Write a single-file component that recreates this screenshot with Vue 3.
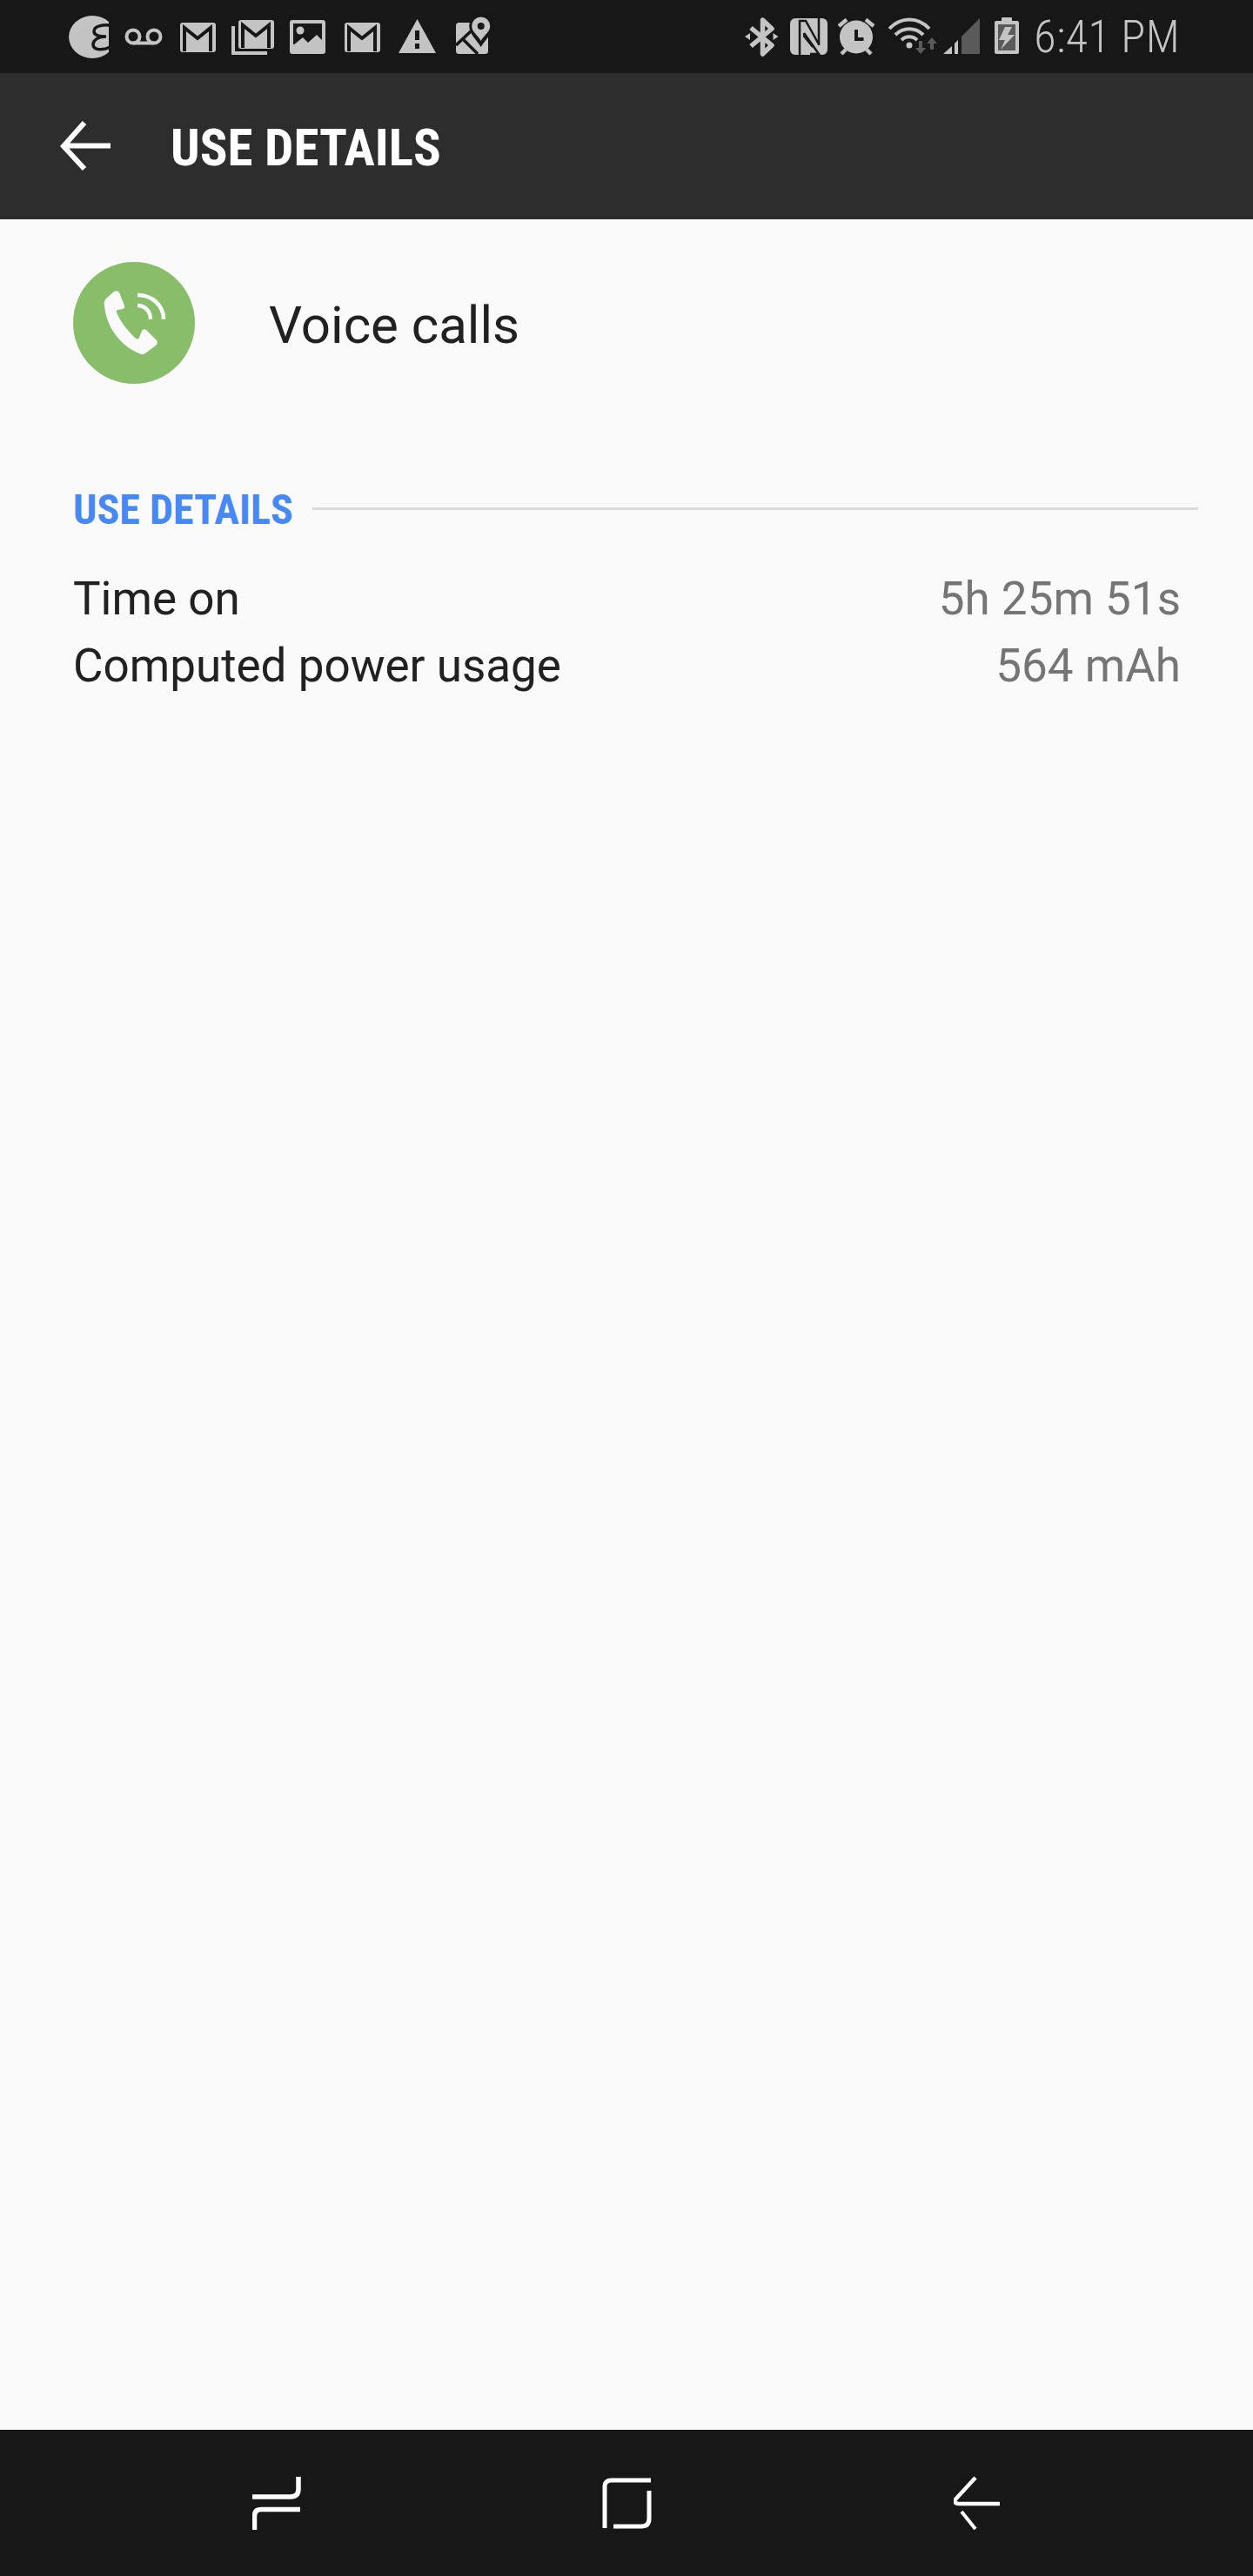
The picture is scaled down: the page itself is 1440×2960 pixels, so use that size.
<script setup>
const rows = [
  { label: 'Time on', value: '5h 25m 51s' },
  { label: 'Computed power usage', value: '564 mAh' }
]
</script>

<template>
  <div class="screen">
    <header class="status">
      <div class="status-left">
        <svg class="si" width="48" height="50" viewBox="78 17 48 50"><path fill="#c4c4c4" d="M125 25A27 24.500 0 1 0 125 60Z"/><g fill="none" stroke="#171717" stroke-width="3.500"><path d="M127 29C118 28 108 30 108 36C108 40 113 42 122 42C113 42 107 46 107 51C107 57 116 59 127 54"/></g></svg>
        <svg class="si m-vm" width="44" height="50" viewBox="143 17 44 50"><g fill="none" stroke="#c4c4c4" stroke-width="4"><circle cx="153" cy="42" r="7.500"/><circle cx="177" cy="42" r="7.500"/><path d="M153 49.500h24"/></g></svg>
        <svg class="si m-a" width="42" height="50" viewBox="207 17 42 50"><rect x="207" y="26" width="41" height="34" rx="3" fill="#c4c4c4"/><path d="M212 59V32l15 12 15-12v27" fill="none" stroke="#171717" stroke-width="4"/></svg>
        <svg class="si m-b" width="50" height="50" viewBox="266 17 50 50"><rect x="274" y="23" width="41" height="33" rx="3" fill="#c4c4c4"/><path d="M279 55V29l15 12 15-12v26" fill="none" stroke="#171717" stroke-width="4"/><path d="M268 30v31h39" fill="none" stroke="#c4c4c4" stroke-width="4"/></svg>
        <svg class="si m-c" width="42" height="50" viewBox="333 17 42 50"><rect x="333" y="23" width="41" height="39" rx="3" fill="#c4c4c4"/><rect x="337" y="27" width="33" height="24" fill="#171717"/><circle cx="345" cy="35" r="4.500" fill="#c4c4c4"/><path d="M337 52l11-9 6 6 10-9 6 6v8H337z" fill="#c4c4c4"/></svg>
        <svg class="si m-d" width="42" height="50" viewBox="396 17 42 50"><rect x="396" y="26" width="41" height="34" rx="3" fill="#c4c4c4"/><path d="M401 59V32l15 12 15-12v27" fill="none" stroke="#171717" stroke-width="4"/></svg>
        <svg class="si m-e" width="44" height="50" viewBox="458 17 44 50"><path d="M479.500 22l21.500 39h-43z" fill="#c4c4c4"/><path d="M477 35h5v11h-5zM477 50h5v6h-5z" fill="#171717"/></svg>
        <svg class="si m-f" width="40" height="50" viewBox="524 17 40 50"><rect x="524" y="26" width="37" height="36" rx="3.500" fill="#c4c4c4"/><path d="M524 52l17-16M532 45l17 17" fill="none" stroke="#171717" stroke-width="3.500"/><path d="M552.700 16.500a13.500 13.500 0 0 0-13.500 13.500c0 9 8 15 13.500 24 5.500-9 13.500-15 13.500-24a13.500 13.500 0 0 0-13.500-13.500z" fill="#171717"/><path d="M552.700 19.500a10.500 10.500 0 0 0-10.500 10.500c0 7 7 10 10.500 17 3.500-7 10.500-10 10.500-17a10.500 10.500 0 0 0-10.500-10.500z" fill="#c4c4c4"/><circle cx="552.700" cy="30" r="4" fill="#171717"/></svg>
      </div>
      <div class="status-right">
        <svg class="si" width="40" height="50" viewBox="856 17 40 50"><path d="M863 32l24 20-10.500 10V23L887 33l-24 20" fill="none" stroke="#c4c4c4" stroke-width="5.500" stroke-linejoin="round"/><path d="M856 42l6-4v8zM894.500 42l-6-4v8z" fill="#c4c4c4"/></svg>
        <svg class="si m-g" width="44" height="50" viewBox="908 17 44 50"><rect x="908" y="21" width="43" height="42" rx="6" fill="#c4c4c4"/><g fill="none" stroke="#171717" stroke-width="2.500"><path d="M919 63V24h7l14.500 26"/><path d="M941 21V52"/><path d="M924 38l17 24h-10"/><path d="M924 38v4l10 12" stroke-width="2"/></g></svg>
        <svg class="si m-h" width="43" height="50" viewBox="963 17 43 50"><circle cx="984" cy="42.500" r="19" fill="#c4c4c4"/><path d="M964 30l9-7.500M1004 30l-9-7.500M967 62l5-5M1001 62l-5-5" stroke="#c4c4c4" stroke-width="4.500" fill="none"/><path d="M984 34v11h8.500" stroke="#171717" stroke-width="4" fill="none"/></svg>
        <svg class="si m-i" width="57" height="50" viewBox="1021 17 57 50"><g fill="none" stroke="#c4c4c4" stroke-width="4"><path d="M1022 33c13-14 33-14 46 0"/><path d="M1029 40c9-9 23-9 32 0"/><path d="M1036 46c5-5 13-5 18 0"/></g><circle cx="1045" cy="52" r="3.500" fill="#c4c4c4"/><path d="M1056 47h4v8h4l-6 7-6-7h4zM1071 43l6 7h-4v7h-4v-7h-4z" fill="#5a5a5a"/></svg>
        <svg class="si m-j" width="43" height="50" viewBox="1084 17 43 50"><path d="M1084 62l10-9 v9z" fill="#c4c4c4"/><path d="M1097 62V50l4-4v16z" fill="#c4c4c4"/><path d="M1105 62V42l21-21v41z" fill="#5a5a5a"/></svg>
        <svg class="si m-k" width="29" height="50" viewBox="1143 17 29 50"><path d="M1152 20h10q1 0 1 1v3h6q2 0 2 2v34q0 2-2 2h-24q-2 0-2-2V26q0-2 2-2h6v-3q0-1 1-1z" fill="#c4c4c4"/><rect x="1147" y="28" width="20" height="30" fill="#5a5a5a"/><path d="M1155 31h8l-5 9h8l-16 17 5-11h-7z" fill="#c4c4c4"/></svg>
        <span class="time">6:41 PM</span>
      </div>
    </header>

    <div class="toolbar">
      <svg class="back" width="60" height="60" viewBox="0 0 60 60"><path d="M28 3L4 30l24 26M4 29.500h54" fill="none" stroke="#fff" stroke-width="6"/></svg>
      <h1 class="title">USE DETAILS</h1>
    </div>

    <main class="content">
      <section class="app-row">
        <div class="app-icon">
          <svg width="140" height="140" viewBox="0 0 140 140">
            <path fill="#fafafa" d="M47 34L38 42Q35 45 36 50C38 76 56 98 78 106Q81 107 83 105L95 96Q98 93 96 90L84 78Q81 76 79 79L76 87Q74 90 71 87C62 78 54 68 50 58Q49 55 52 55L57 54Q60 53 59 50L53 35Q51 32 47 34Z"/>
            <path fill="none" stroke="#fafafa" stroke-width="4.500" d="M74 38C91 38 104 50 104 66M74 50C83 50 89 57 89 66"/>
          </svg>
        </div>
        <span class="app-name">Voice calls</span>
      </section>

      <section class="details">
        <div class="section-head">
          <h2>USE DETAILS</h2>
          <div class="rule"></div>
        </div>
        <div class="rows">
          <div v-for="r in rows" :key="r.label" class="row">
            <span class="label">{{ r.label }}</span>
            <span class="value">{{ r.value }}</span>
          </div>
        </div>
      </section>
    </main>

    <nav class="navbar">
      <svg width="56" height="62" viewBox="0 0 56 62"><g fill="none" stroke="#fff" stroke-width="5.500"><path d="M53 1V15Q53 24 44 24H0"/><path d="M2.500 62V46Q2.500 38.500 10 38.500H55"/></g></svg>
      <svg width="58" height="62" viewBox="0 0 58 62"><g fill="none" stroke="#fff" stroke-width="5"><path d="M3 60V12Q3 5 11 5H56"/><path d="M54 17V49Q54 58 45 58H13"/></g></svg>
      <svg width="56" height="62" viewBox="0 0 56 62"><g fill="none" stroke="#fff"><path stroke-width="4.500" d="M25 2L2 27Q0 32 6 32H53"/><path stroke-width="4" d="M9 41L25 61"/></g></svg>
    </nav>
  </div>
</template>

<style scoped>
.screen {
  width: 1440px;
  height: 2960px;
  display: flex;
  flex-direction: column;
  background: #fafafa;
  font-family: Roboto, "Noto Sans", sans-serif;
  overflow: hidden;
}
.status {
  height: 84px;
  background: #171717;
  display: flex;
  justify-content: space-between;
  align-items: center;
  padding-left: 78px;
  padding-right: 84px;
}
.status-left, .status-right { display: flex; align-items: center; }
.si { display: block; flex: none; }
.m-vm { margin-left: 17px; }
.m-a { margin-left: 20px; }
.m-b { margin-left: 17px; }
.m-c { margin-left: 17px; }
.m-d { margin-left: 21px; }
.m-e { margin-left: 20px; }
.m-f { margin-left: 22px; }
.m-g { margin-left: 12px; }
.m-h { margin-left: 11px; }
.m-i { margin-left: 15px; }
.m-j { margin-left: 6px; }
.m-k { margin-left: 16px; }
.time {
  margin-left: 16px;
  font-size: 52px;
  font-weight: 350;
  color: #c4c4c4;
  letter-spacing: 0.4px;
  font-stretch: 85%;
  white-space: nowrap;
}
.toolbar {
  height: 168px;
  background: #2d2d2d;
  display: flex;
  align-items: center;
  padding-left: 69px;
}
.title {
  margin: 3px 0 0 67px;
  font-size: 59px;
  font-weight: 700;
  font-stretch: 75%;
  color: #fff;
}
.content { flex: 1; }
.app-row {
  display: flex;
  align-items: center;
  padding: 49px 0 0 84px;
}
.app-icon {
  width: 140px;
  height: 140px;
  border-radius: 50%;
  background: #88bd6a;
}
.app-icon svg { display: block; }
.app-name {
  margin: 4px 0 0 85px;
  font-size: 60px;
  color: #212121;
}
.details { padding: 0 63px 0 84px; margin-top: 116px; }
.section-head { display: flex; align-items: center; gap: 22px; }
.section-head h2 {
  margin: 0;
  font-size: 48px;
  font-weight: 700;
  font-stretch: 75%;
  color: #4688f4;
}
.rule { flex: 1; height: 3px; margin-bottom: 3px; background: #dcdcdc; }
.rows { margin-top: 36px; }
.row {
  display: flex;
  justify-content: space-between;
  padding-right: 20px;
  height: 77px;
  line-height: 77px;
  font-size: 53px;
}
.label { color: #212121; }
.value { color: #757575; }
.navbar {
  height: 168px;
  background: #171717;
  display: flex;
  align-items: center;
  padding-left: 290px;
  gap: 346px;
}
.navbar svg { display: block; flex: none; }
</style>

<style>
html, body { margin: 0; padding: 0; background: #fafafa; }
</style>
